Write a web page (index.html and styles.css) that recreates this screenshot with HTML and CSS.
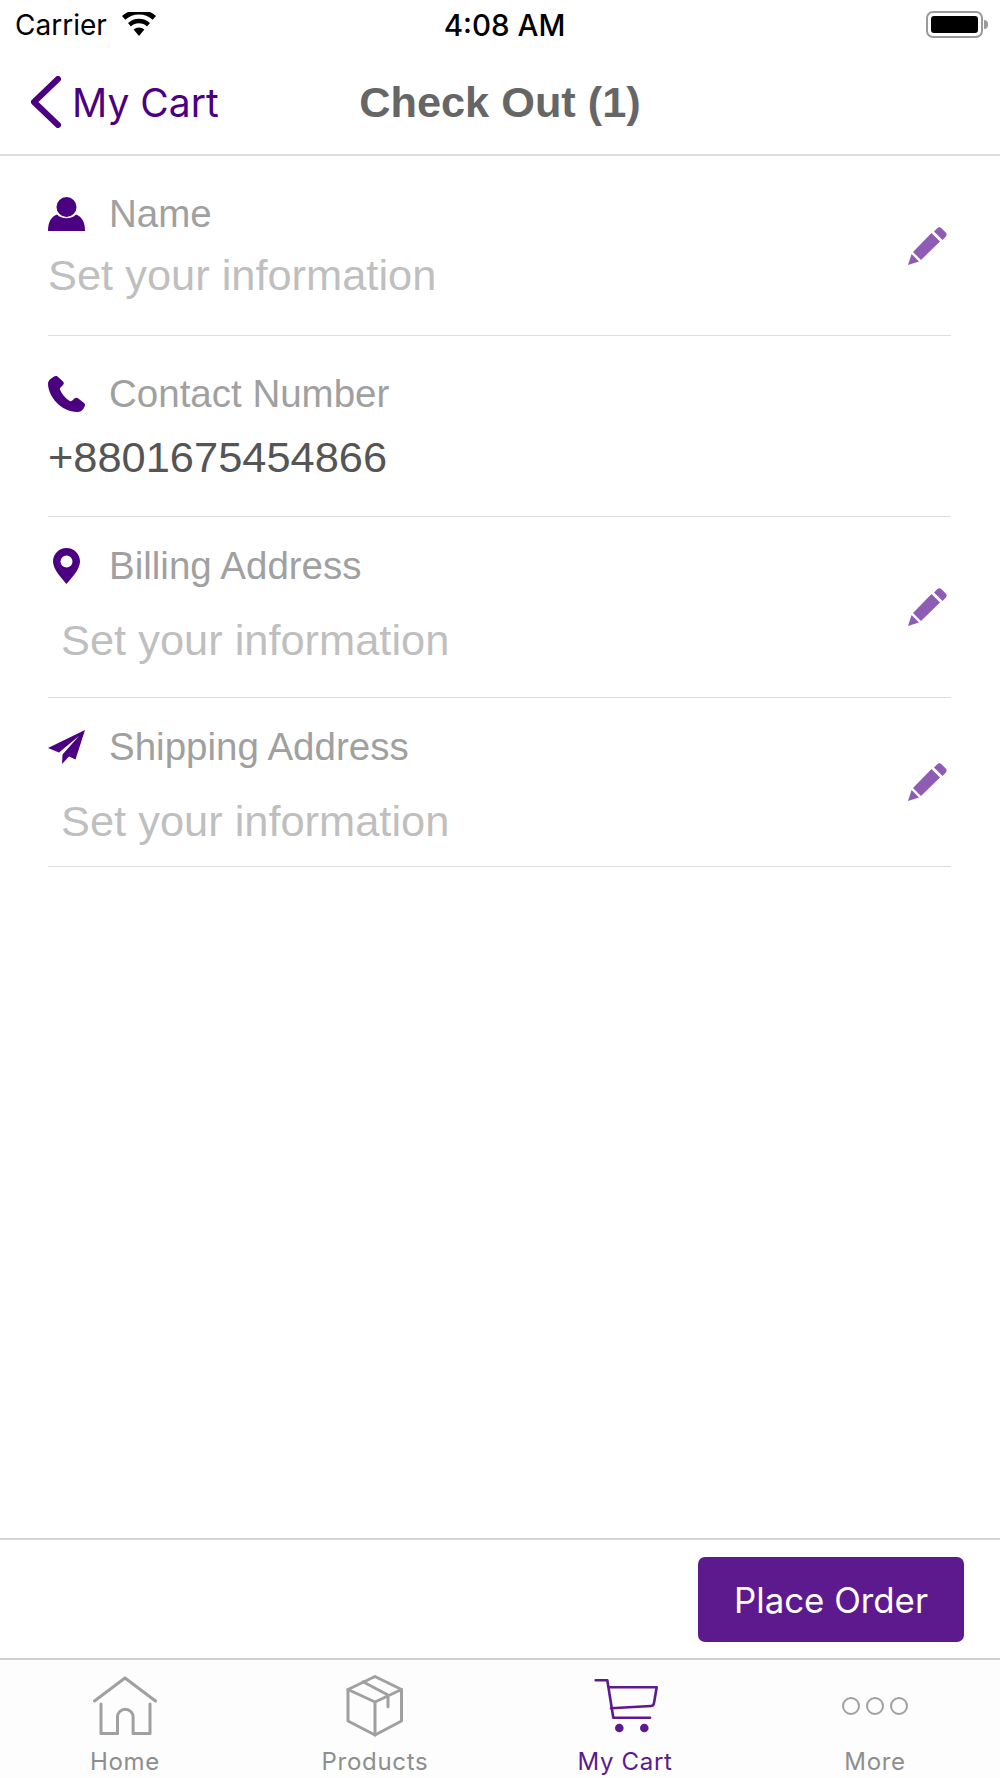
FILE: index.html
```html
<!DOCTYPE html>
<html lang="en">
<head>
    <meta charset="UTF-8">
    <meta name="viewport" content="width=device-width, initial-scale=1.0">
    <title>Check Out</title>
    <link rel="stylesheet" href="styles.css">
</head>
<body>
    <div class="phone">
        <!-- status bar -->
        <div class="status">
            <div class="status-left">
                <span>Carrier</span>
                <svg class="wifi" viewBox="0 0 34 24"><path d="M17 24 11.6 17.6a8 8 0 0 1 10.8 0Z"/><path d="M8.9 14.4 6 11a16.4 16.4 0 0 1 22 0l-2.900 3.400a12 12 0 0 0-16.200 0Z"/><path d="M3.300 7.800 0 4a25.500 25.500 0 0 1 34 0l-3.300 3.800a20.500 20.500 0 0 0-27.400 0Z"/></svg>
            </div>
            <div class="status-time">4:08 AM</div>
            <div class="status-right">
                <div class="battery"><div class="battery-fill"></div></div>
                <div class="battery-nub"></div>
            </div>
        </div>

        <!-- nav -->
        <div class="nav">
            <div class="back">
                <svg class="chevron" viewBox="0 0 32 52"><path d="M28 3 4 26l24 23"/></svg>
                <span>My Cart</span>
            </div>
            <div class="nav-title">Check Out (1)</div>
            <div></div>
        </div>

        <!-- form rows -->
        <div class="rows">
            <div class="row row-name">
                <div class="row-body">
                    <div class="label">
                        <span class="label-icon">
                            <svg viewBox="0 0 37 34"><circle cx="18.500" cy="10" r="10"/><path d="M0 34c0-9 3-14 9-16.500 2.500 2.500 5.700 3.700 9.500 3.700s7-1.200 9.500-3.700C34 20 37 25 37 34Z"/></svg>
                        </span>
                        Name
                    </div>
                    <div class="value placeholder">Set your information</div>
                </div>
                <svg class="pencil" viewBox="0 0 39 38"><path d="M29 1.500a3.500 3.500 0 0 1 4.800 0l3.700 3.700a3.500 3.500 0 0 1 0 4.800l-3 3-8.500-8.500Z"/><path d="M23.500 6 32 14.500 13 33 5 25Z"/><path d="M3.600 27 11 34.500 0 38Z"/></svg>
            </div>

            <div class="row row-contact">
                <div class="row-body">
                    <div class="label">
                        <span class="label-icon">
                            <svg viewBox="0 0 37 36"><path d="M9.500.5C8.500-.2 7-.1 6 .6L2.500 3C.8 4.200 0 6 0 8c.2 6.500 3.500 13 8.500 18.500S21.500 36 29.500 36c2.500 0 4.500-1 5.700-3l1.500-2.700c.6-1.200.3-2.600-.7-3.400l-6-4.700c-1-.8-2.400-.7-3.300.1l-2.700 2.500c-.7.6-1.600.6-2.300.2-2.200-1.400-4.200-3.200-6-5.300-1.500-1.800-2.800-3.800-3.700-5.900-.3-.8-.1-1.600.5-2.200l2.500-2.500c.9-.9 1-2.300.3-3.300Z"/></svg>
                        </span>
                        Contact Number
                    </div>
                    <div class="value">+8801675454866</div>
                </div>
            </div>

            <div class="row row-address">
                <div class="row-body">
                    <div class="label">
                        <span class="label-icon">
                            <svg class="pin" viewBox="0 0 27 36"><path fill-rule="evenodd" d="M13.500 0C6 0 0 6 0 13.500 0 21 8 29.500 13.500 36 19 29.500 27 21 27 13.500 27 6 21 0 13.500 0Zm0 7.500a6 6 0 1 1 0 12 6 6 0 0 1 0-12Z"/></svg>
                        </span>
                        Billing Address
                    </div>
                    <div class="value placeholder indented">Set your information</div>
                </div>
                <svg class="pencil" viewBox="0 0 39 38"><path d="M29 1.500a3.500 3.500 0 0 1 4.800 0l3.700 3.700a3.500 3.500 0 0 1 0 4.800l-3 3-8.500-8.500Z"/><path d="M23.500 6 32 14.500 13 33 5 25Z"/><path d="M3.600 27 11 34.500 0 38Z"/></svg>
            </div>

            <div class="row row-address row-last">
                <div class="row-body">
                    <div class="label">
                        <span class="label-icon">
                            <svg viewBox="0 0 37 34"><path d="M37 0 0 18l11 4.500L31 6 14.500 24.500 14 34l7-7.500 6.500 3Z"/></svg>
                        </span>
                        Shipping Address
                    </div>
                    <div class="value placeholder indented">Set your information</div>
                </div>
                <svg class="pencil" viewBox="0 0 39 38"><path d="M29 1.500a3.500 3.500 0 0 1 4.800 0l3.700 3.700a3.500 3.500 0 0 1 0 4.800l-3 3-8.500-8.500Z"/><path d="M23.500 6 32 14.500 13 33 5 25Z"/><path d="M3.600 27 11 34.500 0 38Z"/></svg>
            </div>
        </div>

        <!-- place order -->
        <div class="order-bar">
            <button class="order-btn">Place Order</button>
        </div>

        <!-- tabs -->
        <div class="tabs">
            <div class="tab">
                <div class="tab-icon">
                    <svg class="home" viewBox="0 0 64 60"><path d="M1.500 25 32 2 62.500 25"/><path d="M8 28v29.500h16.500V41a7.800 7.800 0 0 1 15.600 0v16.500H57V28"/></svg>
                </div>
                <div class="tab-label">Home</div>
            </div>
            <div class="tab">
                <div class="tab-icon">
                    <svg class="box" viewBox="0 0 60 62"><path d="M30 1.500 56.500 14.500V46L30 60 3 46V14.500Z"/><path d="M3 14.500 30 27 56.500 14.500M30 27V60M18 6.700 43 20V31.700"/></svg>
                </div>
                <div class="tab-label">Products</div>
            </div>
            <div class="tab tab-active">
                <div class="tab-icon">
                    <svg class="cart" viewBox="0 0 64 56"><path d="M1.700 2.300H13.300L19.300 39.700H56"/><path d="M15 9.300H62.700L60 25Q59.500 28 57 28L17 30.300"/><circle cx="25.300" cy="50" r="4.300"/><circle cx="50.300" cy="50" r="4.300"/></svg>
                </div>
                <div class="tab-label">My Cart</div>
            </div>
            <div class="tab">
                <div class="tab-icon">
                    <svg class="dots" viewBox="0 0 66 20"><circle cx="9" cy="10" r="8"/><circle cx="33" cy="10" r="8"/><circle cx="57" cy="10" r="8"/></svg>
                </div>
                <div class="tab-label">More</div>
            </div>
        </div>
    </div>
</body>
</html>
```

FILE: styles.css
```css
*{
    box-sizing: border-box;
}
body{
    margin: 0;
    background-color: #fff;
    font-family: "Liberation Sans", Arial, sans-serif;
}
.phone{
    display: flex;
    flex-direction: column;
    width: 1000px;
    height: 1778px;
    overflow: hidden;
}

/* status bar */
.status{
    display: grid;
    grid-template-columns: 1fr auto 1fr;
    align-items: center;
    height: 50px;
    padding: 0 12px 0 15px;
    font-family: Inter, sans-serif;
    font-size: 28px;
    color: #000;
}
.status-left{
    display: flex;
    align-items: center;
    gap: 15px;
}
.wifi{
    width: 34px;
    height: 24px;
    margin-top: -2px;
}
.status-time{
    margin-left: 6px;
    font-size: 29.5px;
    font-weight: 500;
}
.status-right{
    display: flex;
    align-items: center;
    justify-content: flex-end;
    margin-top: -2px;
}
.battery{
    width: 57px;
    height: 27px;
    padding: 3px;
    border: 2px solid #9a9a9a;
    border-radius: 7px;
}
.battery-fill{
    height: 100%;
    background-color: #000;
    border-radius: 3px;
}
.battery-nub{
    width: 4px;
    height: 9px;
    margin-left: 1px;
    background-color: #9a9a9a;
    border-radius: 0 4px 4px 0;
}

/* nav */
.nav{
    display: grid;
    grid-template-columns: 1fr auto 1fr;
    align-items: center;
    height: 106px;
    padding: 0 30px;
    border-bottom: 2px solid #dedede;
}
.back{
    display: flex;
    align-items: center;
    gap: 10px;
    font-family: Inter, sans-serif;
    font-size: 39px;
    color: #4b0082;
}
.chevron{
    width: 32px;
    height: 52px;
    fill: none;
    stroke: #4b0082;
    stroke-width: 6;
    stroke-linecap: round;
    stroke-linejoin: round;
}
.nav-title{
    font-size: 43.3px;
    font-weight: bold;
    color: #666;
}

/* rows */
.rows{
    flex: 1;
    padding: 0 49px 0 48px;
}
.row{
    display: flex;
    align-items: center;
    border-bottom: 1px solid #ddd;
}
.row-name{
    height: 180px;
}
.row-contact{
    height: 181px;
}
.row-name .row-body,.row-contact .row-body{
    padding-top: 38px;
}
.row-name .value{
    margin-top: 19px;
}
.row-contact .value{
    margin-top: 21px;
    color: #555;
}
.row-address{
    height: 181px;
}
.row-address .row-body{
    padding-top: 29px;
}
.row-address .value{
    margin-top: 32px;
}
.row-last{
    height: 169px;
}
.row-body{
    flex: 1;
    align-self: flex-start;
}
.label{
    display: flex;
    align-items: center;
    height: 40px;
    font-size: 38.5px;
    color: #a0a0a0;
}
.label-icon{
    display: flex;
    justify-content: center;
    width: 37px;
    margin-right: 24px;
}
.label-icon svg{
    width: 37px;
    height: 36px;
    fill: #4b0082;
}
.label-icon .pin{
    width: 27px;
}
.value{
    height: 44px;
    line-height: 44px;
    font-size: 43.4px;
}
.placeholder{
    color: #bfbfbf;
}
.indented{
    padding-left: 13px;
}
.pencil{
    width: 39px;
    height: 38px;
    margin-right: 4px;
    fill: #8e5bb5;
}

/* order bar */
.order-bar{
    display: flex;
    justify-content: flex-end;
    height: 120px;
    padding: 17px 36px 0 0;
    border-top: 2px solid #d6d6d6;
}
.order-btn{
    width: 266px;
    height: 85px;
    border: 0;
    border-radius: 7px;
    background-color: #5c1a8e;
    color: #fff;
    font-family: Inter, sans-serif;
    font-size: 34.8px;
}

/* tabs */
.tabs{
    display: grid;
    grid-template-columns: repeat(4, 1fr);
    height: 120px;
    padding-top: 15px;
    border-top: 2px solid #d0d0d0;
    background-color: #fdfdfd;
}
.tab{
    display: flex;
    flex-direction: column;
    align-items: center;
    color: #8e8e8e;
}
.tab-icon{
    display: flex;
    align-items: center;
    justify-content: center;
    height: 62px;
}
.tab-label{
    margin-top: 10px;
    font-family: Inter, sans-serif;
    font-size: 24px;
    letter-spacing: 0.7px;
}
.tab-active{
    color: #5c1a8e;
}
.tab-icon svg{
    fill: none;
    stroke: #a0a0a0;
    stroke-width: 3;
    stroke-linejoin: round;
    stroke-linecap: round;
}
.home{
    width: 64px;
    height: 60px;
}
.box{
    width: 60px;
    height: 62px;
}
.cart{
    width: 64px;
    height: 56px;
    margin-left: 1px;
}
.tab-icon .cart{
    stroke: #5c1a8e;
    stroke-width: 2.6;
}
.tab-icon .cart circle{
    fill: #5c1a8e;
    stroke: none;
}
.dots{
    width: 66px;
    height: 20px;
}
.tab-icon .dots{
    stroke-width: 2;
}
```
